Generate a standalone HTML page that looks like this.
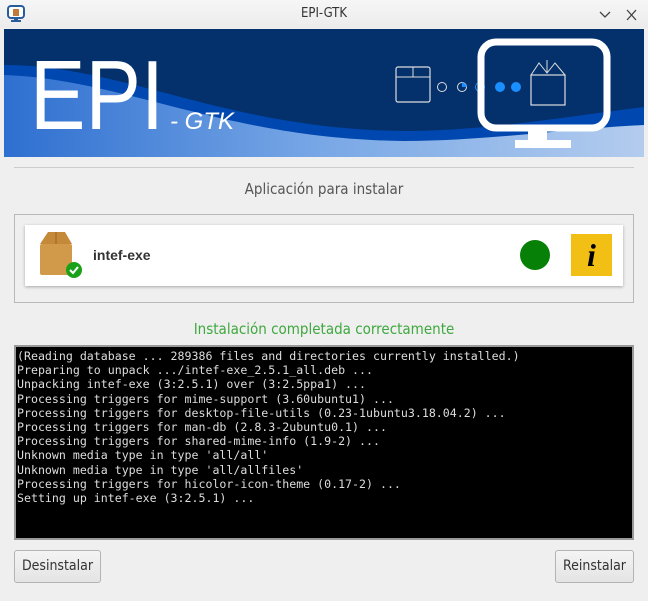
<!DOCTYPE html>
<html><head><style>
*{margin:0;padding:0;box-sizing:border-box}
body{width:648px;height:601px;background:#efefef;font-family:"Liberation Sans",sans-serif;position:relative;overflow:hidden}
.abs{position:absolute}
.term div{height:14.2px;white-space:pre}
.btn{position:absolute;top:550px;height:33px;border:1px solid #b4b4b4;border-radius:3px;background:linear-gradient(#f4f4f4,#e4e4e4);font-size:14px;color:#333;line-height:31px;text-align:center;font-family:"DejaVu Sans Condensed","Liberation Sans",sans-serif}
</style></head><body>
<div class="abs" style="left:0;top:0;width:648px;height:28px;background:linear-gradient(#f6f6f6,#ececec)"></div>
<svg class="abs" style="left:7px;top:5px" width="20" height="18" viewBox="0 0 20 18"><rect x="1" y="1" width="16" height="12" rx="3" fill="#fff" stroke="#2a5d9c" stroke-width="2"/><rect x="6" y="4" width="6" height="7" fill="#c07a3a"/><rect x="7" y="13" width="4" height="3" fill="#2a5d9c"/><rect x="4" y="15" width="10" height="2" fill="#2a5d9c"/></svg>
<div class="abs" style="left:0;top:6px;width:648px;text-align:center;font-size:13px;color:#333;font-family:'DejaVu Sans Condensed','Liberation Sans',sans-serif">EPI-GTK</div>
<svg class="abs" style="left:597px;top:8px" width="44" height="14"><path d="M3 4l5 5 5-5" stroke="#444" fill="none" stroke-width="1.3"/><path d="M30 2l9 10M39 2l-9 10" stroke="#444" stroke-width="1.3"/></svg>
<svg class="abs" style="left:4px;top:29px" width="640" height="128" viewBox="0 0 640 128">
<defs><linearGradient id="g" x1="0" x2="1"><stop offset="0" stop-color="#2e6fd0"/><stop offset="0.5" stop-color="#79a8e6"/><stop offset="1" stop-color="#b3ccee"/></linearGradient></defs>
<rect width="640" height="128" fill="#04316c"/>
<path d="M0 36 C120 36 220 100 400 102 C480 102 560 88 640 78 L640 128 L0 128Z" fill="#0047b0"/>
<path d="M0 46 C120 50 220 110 400 112 C480 112 560 100 640 96 L640 128 L0 128Z" fill="url(#g)"/>
<text x="26" y="100" fill="#fff" font-family="Liberation Sans" font-size="98" textLength="134" lengthAdjust="spacingAndGlyphs">EPI</text>
<text x="166" y="100" fill="#fff" font-family="Liberation Sans" font-style="italic" font-size="24">- GTK</text>
<rect x="392" y="38" width="34" height="35" rx="2" fill="none" stroke="#ddd" stroke-width="1.2"/>
<path d="M392 48h34M409 38v10" stroke="#ddd"/>
<circle cx="438" cy="58" r="4.5" fill="none" stroke="#ddd"/>
<circle cx="458" cy="58" r="4.5" fill="none" stroke="#ddd"/><path d="M458 58v-4.5a4.5 4.5 0 0 1 4.5 4.5z" fill="#1a8fff"/>
<circle cx="476" cy="58" r="4.5" fill="none" stroke="#1a8fff"/>
<circle cx="496" cy="58" r="5" fill="#1a8fff"/>
<circle cx="512" cy="58" r="5" fill="#1a8fff"/>
<rect x="477" y="13" width="126" height="86" rx="15" fill="none" stroke="#fff" stroke-width="7"/>
<rect x="524" y="99" width="19" height="14" fill="#fff"/>
<rect x="511" y="111" width="56" height="8" fill="#fff"/>
<rect x="527" y="46" width="34" height="30" fill="none" stroke="#ddd" stroke-width="1.2"/>
<path d="M527 46l8-12 8 10 8-10 10 12M543 31v13" stroke="#ddd" fill="none"/>
</svg>
<div class="abs" style="left:14px;top:167px;width:620px;height:1px;background:#ccc"></div>
<div class="abs" style="left:0;top:180px;width:648px;text-align:center;font-size:15px;color:#555;font-family:'DejaVu Sans Condensed','Liberation Sans',sans-serif">Aplicación para instalar</div>
<div class="abs" style="left:14px;top:214px;width:620px;height:89px;border:1px solid #b8b8b8"></div>
<div class="abs" style="left:25px;top:225px;width:598px;height:61px;background:#fff;box-shadow:0 1px 3px rgba(0,0,0,.3)"></div>
<svg class="abs" style="left:38px;top:230px" width="46" height="50"><path d="M2 14 L10 2 H27 L34 14Z" fill="#c48a3a"/><rect x="2" y="14" width="32" height="31" rx="2" fill="#d09a4a"/><path d="M18 2v12" stroke="#9a6420"/><circle cx="36" cy="40" r="8" fill="#1aa11a"/><path d="M32 40l3 3 5-6" stroke="#fff" stroke-width="2" fill="none"/></svg>
<div class="abs" style="left:93px;top:247px;font-size:14px;font-weight:bold;color:#333">intef-exe</div>
<div class="abs" style="left:520px;top:240px;width:30px;height:30px;border-radius:50%;background:#068006"></div>
<div class="abs" style="left:571px;top:234px;width:41px;height:42px;background:#f2c014;text-align:center;font-family:'Liberation Serif',serif;font-style:italic;font-weight:bold;font-size:32px;line-height:42px;color:#000">i</div>
<div class="abs" style="left:0;top:320px;width:648px;text-align:center;font-size:15px;color:#3fa83f;font-family:'DejaVu Sans Condensed','Liberation Sans',sans-serif">Instalación completada correctamente</div>
<div class="abs term" style="left:14px;top:345px;width:620px;height:195px;background:#000;border:2px solid #999;padding:2px 0 0 1px;color:#ddd;font-family:'DejaVu Sans Mono',monospace;font-size:11.6px;line-height:14.2px">
<div>(Reading database ... 289386 files and directories currently installed.)</div>
<div>Preparing to unpack .../intef-exe_2.5.1_all.deb ...</div>
<div>Unpacking intef-exe (3:2.5.1) over (3:2.5ppa1) ...</div>
<div>Processing triggers for mime-support (3.60ubuntu1) ...</div>
<div>Processing triggers for desktop-file-utils (0.23-1ubuntu3.18.04.2) ...</div>
<div>Processing triggers for man-db (2.8.3-2ubuntu0.1) ...</div>
<div>Processing triggers for shared-mime-info (1.9-2) ...</div>
<div>Unknown media type in type 'all/all'</div>
<div>Unknown media type in type 'all/allfiles'</div>
<div>Processing triggers for hicolor-icon-theme (0.17-2) ...</div>
<div>Setting up intef-exe (3:2.5.1) ...</div>
</div>
<div class="btn" style="left:14px;width:87px">Desinstalar</div>
<div class="btn" style="left:555px;width:79px">Reinstalar</div>
</body></html>
